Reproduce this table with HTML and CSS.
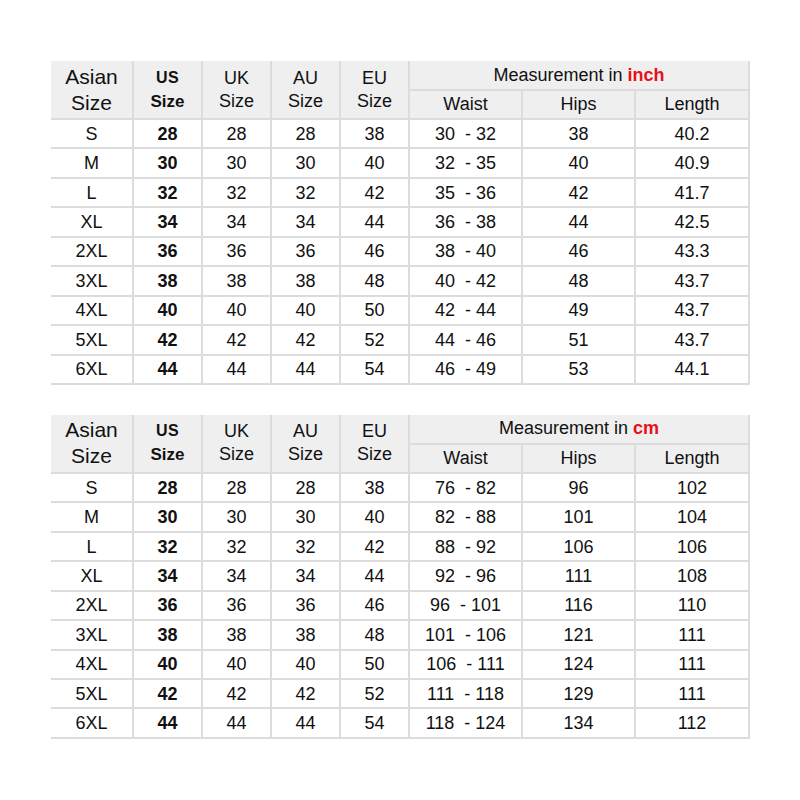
FILE: index.html
```html
<!DOCTYPE html>
<html>
<head>
<meta charset="utf-8">
<link rel="stylesheet" href="styles.css">
</head>
<body>
<div class="page">
<table class="size">
<colgroup><col class="c1"><col class="c2"><col class="c2"><col class="c2"><col class="c2"><col class="c3"><col class="c3"><col class="c4"></colgroup>
<thead>
<tr class="h1"><th rowspan="2" class="asian">Asian<br>Size</th><th rowspan="2" class="us"><span class="usl">US</span><br>Size</th><th rowspan="2">UK<br>Size</th><th rowspan="2">AU<br>Size</th><th rowspan="2">EU<br>Size</th><th colspan="3" class="meas">Measurement in <span class="red">inch</span></th></tr>
<tr class="h2"><th>Waist</th><th>Hips</th><th>Length</th></tr>
</thead>
<tbody>
<tr><td>S</td><td class="b">28</td><td>28</td><td>28</td><td>38</td><td class="w">30  - 32</td><td>38</td><td>40.2</td></tr>
<tr><td>M</td><td class="b">30</td><td>30</td><td>30</td><td>40</td><td class="w">32  - 35</td><td>40</td><td>40.9</td></tr>
<tr><td>L</td><td class="b">32</td><td>32</td><td>32</td><td>42</td><td class="w">35  - 36</td><td>42</td><td>41.7</td></tr>
<tr><td>XL</td><td class="b">34</td><td>34</td><td>34</td><td>44</td><td class="w">36  - 38</td><td>44</td><td>42.5</td></tr>
<tr><td>2XL</td><td class="b">36</td><td>36</td><td>36</td><td>46</td><td class="w">38  - 40</td><td>46</td><td>43.3</td></tr>
<tr><td>3XL</td><td class="b">38</td><td>38</td><td>38</td><td>48</td><td class="w">40  - 42</td><td>48</td><td>43.7</td></tr>
<tr><td>4XL</td><td class="b">40</td><td>40</td><td>40</td><td>50</td><td class="w">42  - 44</td><td>49</td><td>43.7</td></tr>
<tr><td>5XL</td><td class="b">42</td><td>42</td><td>42</td><td>52</td><td class="w">44  - 46</td><td>51</td><td>43.7</td></tr>
<tr><td>6XL</td><td class="b">44</td><td>44</td><td>44</td><td>54</td><td class="w">46  - 49</td><td>53</td><td>44.1</td></tr>
</tbody>
</table>

<table class="size">
<colgroup><col class="c1"><col class="c2"><col class="c2"><col class="c2"><col class="c2"><col class="c3"><col class="c3"><col class="c4"></colgroup>
<thead>
<tr class="h1"><th rowspan="2" class="asian">Asian<br>Size</th><th rowspan="2" class="us"><span class="usl">US</span><br>Size</th><th rowspan="2">UK<br>Size</th><th rowspan="2">AU<br>Size</th><th rowspan="2">EU<br>Size</th><th colspan="3" class="meas">Measurement in <span class="red">cm</span></th></tr>
<tr class="h2"><th>Waist</th><th>Hips</th><th>Length</th></tr>
</thead>
<tbody>
<tr><td>S</td><td class="b">28</td><td>28</td><td>28</td><td>38</td><td class="w">76  - 82</td><td>96</td><td>102</td></tr>
<tr><td>M</td><td class="b">30</td><td>30</td><td>30</td><td>40</td><td class="w">82  - 88</td><td>101</td><td>104</td></tr>
<tr><td>L</td><td class="b">32</td><td>32</td><td>32</td><td>42</td><td class="w">88  - 92</td><td>106</td><td>106</td></tr>
<tr><td>XL</td><td class="b">34</td><td>34</td><td>34</td><td>44</td><td class="w">92  - 96</td><td>111</td><td>108</td></tr>
<tr><td>2XL</td><td class="b">36</td><td>36</td><td>36</td><td>46</td><td class="w">96  - 101</td><td>116</td><td>110</td></tr>
<tr><td>3XL</td><td class="b">38</td><td>38</td><td>38</td><td>48</td><td class="w">101  - 106</td><td>121</td><td>111</td></tr>
<tr><td>4XL</td><td class="b">40</td><td>40</td><td>40</td><td>50</td><td class="w">106  - 111</td><td>124</td><td>111</td></tr>
<tr><td>5XL</td><td class="b">42</td><td>42</td><td>42</td><td>52</td><td class="w">111  - 118</td><td>129</td><td>111</td></tr>
<tr><td>6XL</td><td class="b">44</td><td>44</td><td>44</td><td>54</td><td class="w">118  - 124</td><td>134</td><td>112</td></tr>
</tbody>
</table>
</div>
</body>
</html>
```

FILE: styles.css
```css
html, body {
  margin: 0;
  padding: 0;
  background: #ffffff;
}
.page {
  padding: 61px 0 0 51px;
  display: flex;
  flex-direction: column;
  gap: 30px;
  font-family: "Liberation Sans", Arial, sans-serif;
  color: #111;
}
.size {
  border-collapse: collapse;
  table-layout: fixed;
  width: 699px;
}
.c1 { width: 82px; }
.c2 { width: 69px; }
.c3 { width: 113px; }
.c4 { width: 114px; }
.size th, .size td {
  padding: 0;
  text-align: center;
  vertical-align: middle;
  border: 2px solid #dcdcdc;
  font-weight: normal;
}
.size tr > :first-child { border-left: none; }
.size thead tr:first-child th { border-top: none; }
.size th {
  background: #efefef;
  font-size: 18px;
  line-height: 23px;
}
.size .asian {
  font-size: 21px;
  line-height: 26px;
}
.size .us {
  font-weight: bold;
  font-size: 17px;
  line-height: 24px;
}
.usl { font-size: 16px; letter-spacing: 0.5px; }
.h1 { height: 29px; }
.h2 { height: 29px; }
.size td {
  height: 29.45px;
  box-sizing: border-box;
  font-size: 18px;
  line-height: 19px;
  padding-top: 1px;
}
.size td.b { font-weight: bold; }
.size td.w { white-space: pre; }
.meas { font-size: 17px; }
.red { color: #e8101a; font-weight: bold; }
```
